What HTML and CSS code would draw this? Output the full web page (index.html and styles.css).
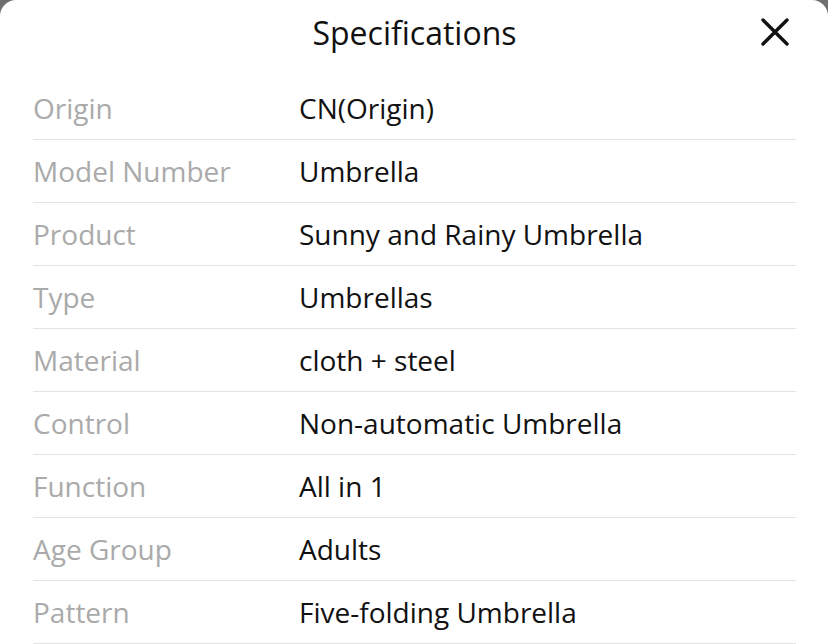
FILE: index.html
```html
<!DOCTYPE html>
<html>
<head>
<meta charset="utf-8">
<link rel="stylesheet" href="styles.css">
</head>
<body>
<div class="sheet">
  <header class="head">
    <h1 class="title">Specifications</h1>
    <button class="close" aria-label="Close">
      <svg width="30" height="30" viewBox="0 0 30 30"><path d="M3 3 L27 27 M27 3 L3 27" stroke="#111" stroke-width="3.4" stroke-linecap="round" fill="none"/></svg>
    </button>
  </header>
  <div class="list">
    <div class="row"><span class="label">Origin</span><span class="value">CN(Origin)</span></div>
    <div class="row"><span class="label">Model Number</span><span class="value">Umbrella</span></div>
    <div class="row"><span class="label">Product</span><span class="value">Sunny and Rainy Umbrella</span></div>
    <div class="row"><span class="label">Type</span><span class="value">Umbrellas</span></div>
    <div class="row"><span class="label">Material</span><span class="value">cloth + steel</span></div>
    <div class="row"><span class="label">Control</span><span class="value">Non-automatic Umbrella</span></div>
    <div class="row"><span class="label">Function</span><span class="value">All in 1</span></div>
    <div class="row"><span class="label">Age Group</span><span class="value">Adults</span></div>
    <div class="row"><span class="label">Pattern</span><span class="value">Five-folding Umbrella</span></div>
  </div>
</div>
</body>
</html>
```
FILE: styles.css
```css
html, body {
  margin: 0;
  padding: 0;
  background: #6f6f6f;
  height: 100%;
  overflow: hidden;
}
.sheet {
  background: #fff;
  border-radius: 16px 16px 0 0;
  height: 100%;
  font-family: "Open Sans", "Noto Sans", sans-serif;
  box-sizing: border-box;
  padding: 0 32px 0 33px;
}
.head {
  height: 77px;
  display: flex;
  align-items: center;
  justify-content: center;
  position: relative;
}
.title {
  margin: 0;
  font-size: 32px;
  font-weight: 400;
  color: #111;
  line-height: 1;
  padding-bottom: 12px;
}
.close {
  position: absolute;
  right: 6px;
  top: 17px;
  background: none;
  border: 0;
  padding: 0;
  width: 30px;
  height: 30px;
  display: flex;
}
.row {
  height: 63px;
  box-sizing: border-box;
  border-bottom: 1px solid #e3e3e3;
  display: flex;
  align-items: center;
  font-size: 28px;
}
.label {
  width: 266px;
  color: #aaaaaa;
  flex: none;
}
.value {
  color: #111;
}
```
